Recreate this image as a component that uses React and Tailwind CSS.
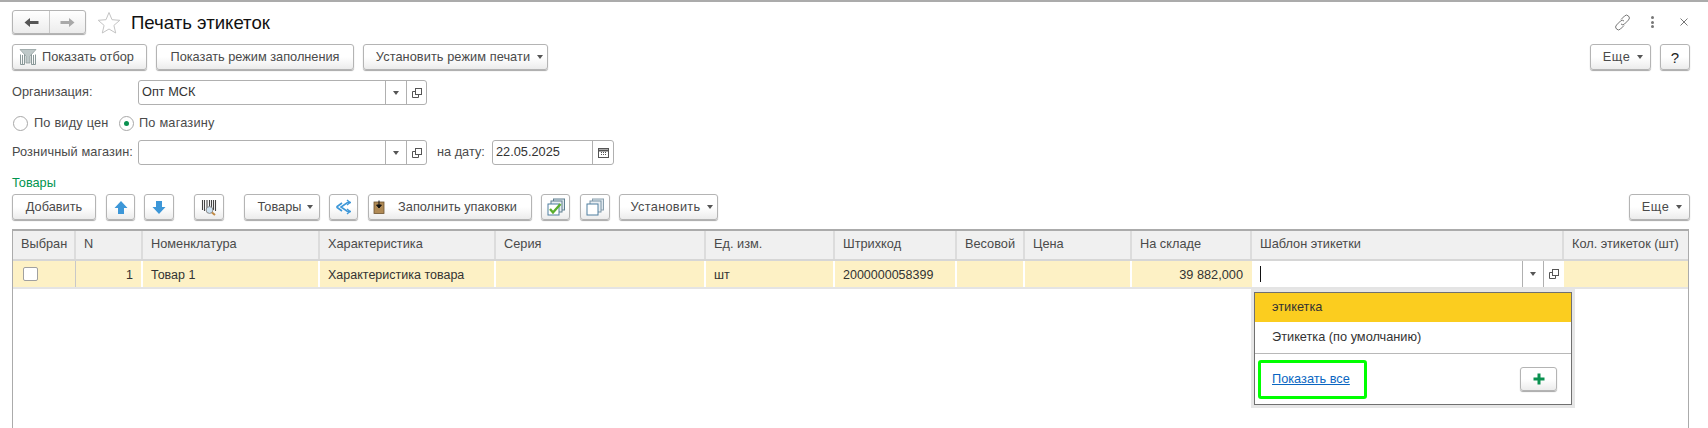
import React from "react";

function Caret() {
  return <span className="inline-block w-0 h-0 border-l-[3.5px] border-r-[3.5px] border-t-[4px] border-l-transparent border-r-transparent border-t-[#555]" />;
}

function Btn({ w, className = "", children }) {
  return (
    <div
      className={`flex items-center justify-center h-[26px] shrink-0 rounded-[3px] border border-[#b4b4b4] bg-gradient-to-b from-white via-white to-[#ececec] shadow-[0_1px_1px_#a8a8a8] text-[#4a4a4a] ${w} ${className}`}
    >
      {children}
    </div>
  );
}

function OpenIcon() {
  return (
    <svg width="12" height="12" viewBox="0 0 12 12" fill="none" stroke="#555" strokeWidth="1">
      <rect x="4.5" y="1.5" width="6" height="6" />
      <path d="M4.5 4.5H1.5V10.5H7.5V7.5" />
    </svg>
  );
}

function Field({ w, children }) {
  return (
    <div className={`flex items-stretch h-[25px] rounded-[3px] border border-[#b0b0b0] bg-white shrink-0 ${w}`}>
      <div className="flex-1 pl-[3px] flex items-center text-[#333]">{children}</div>
      <div className="w-[21px] border-l border-[#b0b0b0] flex items-center justify-center"><Caret /></div>
      <div className="w-[20px] border-l border-[#b0b0b0] flex items-center justify-center"><OpenIcon /></div>
    </div>
  );
}

const cols = [
  "Выбран",
  "N",
  "Номенклатура",
  "Характеристика",
  "Серия",
  "Ед. изм.",
  "Штрихкод",
  "Весовой",
  "Цена",
  "На складе",
  "Шаблон этикетки",
  "Кол. этикеток (шт)",
];

export default function App() {
  return (
    <div className="relative w-[1708px] h-[428px] overflow-hidden bg-white text-[12.75px] leading-none text-[#4a4a4a] font-['Liberation_Sans',Arial,sans-serif]">
      {/* top line */}
      <div className="h-[2px] bg-[#ababab]" />

      {/* title bar */}
      <div className="flex items-center h-[24px] mt-[8px] ml-[12px] mr-[20px]">
        <div className="flex items-stretch w-[74px] h-[24px] rounded-[3px] border border-[#b4b4b4] bg-gradient-to-b from-white to-[#ececec] shadow-[0_1px_1px_#a8a8a8]">
          <div className="w-[37px] flex items-center justify-center border-r border-[#c8c8c8]">
            <svg width="15" height="11" viewBox="0 0 15 11"><path d="M0.5 5.5L6 1V4H14.5V7H6V10Z" fill="#555" /></svg>
          </div>
          <div className="flex-1 flex items-center justify-center">
            <svg width="15" height="11" viewBox="0 0 15 11"><path d="M14.5 5.5L9 1V4H0.5V7H9V10Z" fill="#a8a8a8" /></svg>
          </div>
        </div>
        <svg className="ml-[11px]" width="24" height="23" viewBox="0 0 24 23" fill="none" stroke="#c4c4c4" strokeWidth="1">
          <path d="M12 1.5L15 8.7L22.8 9.3L16.9 14.4L18.7 22L12 18L5.3 22L7.1 14.4L1.2 9.3L9 8.7Z" />
        </svg>
        <div className="ml-[10px] mt-[2px] text-[18.6px] text-[#111]">Печать этикеток</div>
        <div className="ml-auto flex items-center">
          <svg width="17" height="17" viewBox="0 0 17 17" fill="none" stroke="#777" strokeWidth="1">
            <path d="M7 5.5L10.5 2a2.6 2.6 0 0 1 4 4L10.5 10a2.6 2.6 0 0 1-3.5 0" />
            <path d="M10 11.5L6.5 15a2.6 2.6 0 0 1-4-4L6.5 7a2.6 2.6 0 0 1 3.5 0" />
          </svg>
          <div className="ml-[20px] flex flex-col gap-[1.5px]">
            <span className="w-[3px] h-[3px] rounded-full bg-[#777]" />
            <span className="w-[3px] h-[3px] rounded-full bg-[#777]" />
            <span className="w-[3px] h-[3px] rounded-full bg-[#777]" />
          </div>
          <svg className="ml-[26px]" width="8" height="8" viewBox="0 0 8 8" stroke="#777" strokeWidth="1"><path d="M0.5 0.5L7.5 7.5M7.5 0.5L0.5 7.5" /></svg>
        </div>
      </div>

      {/* command bar */}
      <div className="flex items-center mt-[10px] ml-[12px] mr-[18px]">
        <Btn w="w-[135px]" className="justify-start pl-[6px]">
          <svg width="18" height="18" viewBox="0 0 18 18" fill="none">
            <path d="M1 1.5H17L11 8V15H7V8Z" fill="#bfc9c9" stroke="#93a0a0" strokeWidth="0.8" />
            <path d="M1.5 6.5V16.5H5.5V6.5M12.5 6.5V16.5H16.5V6.5M3.5 7V16M14.5 7V16" stroke="#7d8d8d" strokeWidth="0.9" />
          </svg>
          <span className="ml-[5px]">Показать отбор</span>
        </Btn>
        <Btn w="w-[198px]" className="ml-[9px]">Показать режим заполнения</Btn>
        <Btn w="w-[185px]" className="ml-[9px] pl-[8px] tracking-[0.08px]">
          <span>Установить режим печати</span>
          <span className="ml-[7px] flex"><Caret /></span>
        </Btn>
        <Btn w="w-[61px]" className="ml-auto pl-[5px] tracking-[0.6px]">
          <span>Еще</span>
          <span className="ml-[7px] flex"><Caret /></span>
        </Btn>
        <Btn w="w-[30px]" className="ml-[9px] text-[#222] text-[15px]">?</Btn>
      </div>

      {/* organization */}
      <div className="flex items-center mt-[10px] ml-[12px]">
        <div className="w-[126px]">Организация:</div>
        <Field w="w-[289px]">Опт МСК</Field>
      </div>

      {/* radios */}
      <div className="flex items-center mt-[11px] ml-[13px] h-[14px] tracking-[0.2px]">
        <span className="w-[15px] h-[15px] rounded-full border border-[#a8a8a8] bg-white" />
        <span className="ml-[6px] w-[85px]">По виду цен</span>
        <span className="w-[15px] h-[15px] rounded-full border border-[#a8a8a8] bg-white flex items-center justify-center">
          <span className="w-[5px] h-[5px] rounded-full bg-[#0a9150]" />
        </span>
        <span className="ml-[5px]">По магазину</span>
      </div>

      {/* retail store */}
      <div className="flex items-center mt-[10px] ml-[12px]">
        <div className="w-[126px] whitespace-nowrap tracking-[0.1px]">Розничный магазин:</div>
        <Field w="w-[289px]" />
        <div className="ml-[10px] w-[55px]">на дату:</div>
        <div className="flex items-stretch h-[25px] w-[122px] rounded-[3px] border border-[#b0b0b0] bg-white">
          <div className="flex-1 pl-[3px] flex items-center text-[#333]">22.05.2025</div>
          <div className="w-[21px] border-l border-[#b0b0b0] flex items-center justify-center">
            <svg width="11" height="11" viewBox="0 0 11 11" fill="none" stroke="#555"><rect x="0.5" y="1.5" width="10" height="9" /><path d="M0.5 3.5H10.5" strokeWidth="2" /><path d="M3 5.5h1M5 5.5h1M7 5.5h1M3 7.5h1M5 7.5h1M7 7.5h1" /></svg>
          </div>
        </div>
      </div>

      {/* group title */}
      <div className="mt-[12px] ml-[12px] h-[13px] text-[#00954f]">Товары</div>

      {/* table toolbar */}
      <div className="flex items-center mt-[4px] ml-[12px] mr-[18px]">
        <Btn w="w-[84px]">Добавить</Btn>
        <Btn w="w-[29px]" className="ml-[10px]">
          <svg width="14" height="15" viewBox="0 0 14 15"><path d="M7 1L13.5 8H10V14H4V8H0.5Z" fill="#3d97d8" /></svg>
        </Btn>
        <Btn w="w-[30px]" className="ml-[9px]">
          <svg width="14" height="15" viewBox="0 0 14 15"><path d="M7 14L13.5 7H10V1H4V7H0.5Z" fill="#3d97d8" /></svg>
        </Btn>
        <Btn w="w-[30px]" className="ml-[20px]">
          <svg width="16" height="17" viewBox="0 0 16 17" fill="none">
            <path d="M1.5 1V11M3.5 1V12M6 1V10M8.5 1V9M10.5 1V9M12.5 1V11M14.5 1V12" stroke="#444" strokeWidth="1.1" />
            <circle cx="8.5" cy="11" r="3.4" fill="#cfe3f2" stroke="#8a8a8a" />
            <path d="M11 13.5L14 16" stroke="#c08a45" strokeWidth="2" />
          </svg>
        </Btn>
        <Btn w="w-[76px]" className="ml-[20px] pl-[7px]">
          <span>Товары</span>
          <span className="ml-[6px] flex"><Caret /></span>
        </Btn>
        <Btn w="w-[29px]" className="ml-[9px]">
          <svg width="18" height="16" viewBox="0 0 18 16" fill="none" stroke="#3d97d8" strokeWidth="1.6">
            <path d="M16 3.5H12.5L6 8L12.5 12.5H16" />
            <path d="M1.5 8L7 4M1.5 8L7 12" />
            <path d="M12 1L15 3.5L12 6M12 10L15 12.5L12 15" strokeWidth="1.3" />
          </svg>
        </Btn>
        <Btn w="w-[164px]" className="ml-[10px] pr-[10px]">
          <svg width="12" height="14" viewBox="0 0 12 14">
            <rect x="1" y="2" width="10" height="11.5" fill="#b08a55" stroke="#6e5330" strokeWidth="0.8" />
            <path d="M6 0.5V7M3.6 5L6 8L8.4 5Z" fill="#111" stroke="#111" strokeWidth="1" />
          </svg>
          <span className="ml-[13px]">Заполнить упаковки</span>
        </Btn>
        <Btn w="w-[29px]" className="ml-[9px]">
          <svg width="18" height="18" viewBox="0 0 18 18" fill="none">
            <rect x="6.5" y="1" width="11" height="11" fill="#dfe8ee" stroke="#5f7f8f" />
            <rect x="4" y="3" width="11" height="11" fill="#e9eef2" stroke="#5f7f8f" />
            <rect x="1" y="6" width="11" height="11" fill="#fff" stroke="#4f7f9f" />
            <path d="M3 11L6 14.5L13.5 6" stroke="#5aae2d" strokeWidth="2.4" />
          </svg>
        </Btn>
        <Btn w="w-[30px]" className="ml-[10px]">
          <svg width="18" height="18" viewBox="0 0 18 18" fill="none">
            <rect x="6.5" y="1" width="11" height="11" fill="#dfe8ee" stroke="#8aa0ae" />
            <rect x="4" y="3" width="11" height="11" fill="#e9eef2" stroke="#7a94a5" />
            <rect x="1" y="6" width="11" height="11" fill="#fff" stroke="#4f7f9f" />
          </svg>
        </Btn>
        <Btn w="w-[99px]" className="ml-[9px] pl-[7px] tracking-[0.3px]">
          <span>Установить</span>
          <span className="ml-[7px] flex"><Caret /></span>
        </Btn>
        <Btn w="w-[61px]" className="ml-auto pl-[5px] tracking-[0.6px]">
          <span>Еще</span>
          <span className="ml-[7px] flex"><Caret /></span>
        </Btn>
      </div>

      {/* table */}
      <div className="mt-[9px] ml-[12px] w-[1677px] h-[200px] border-t-2 border-l border-r border-[#ababab]">
        <div className="grid grid-cols-[63px_67px_177px_176px_210px_129px_122px_68px_107px_120px_312px_121px] h-[30px] bg-[#f0f0f0] border-b-2 border-[#d6d6d6]">
          {cols.map((h, i) => (
            <div key={h} className={`flex items-center whitespace-nowrap pl-[8px] pb-[2px] ${i < 11 ? "border-r-2 border-[#dcdcdc]" : ""}`}>
              {h}
            </div>
          ))}
        </div>
        <div className="grid grid-cols-[63px_67px_177px_176px_210px_129px_122px_68px_107px_120px_312px_121px] h-[28px] bg-[#fdf1c5] border-b-2 border-[#e4e4e4] text-[12.5px] text-[#333]">
          <div className="flex items-center pl-[10px] border-r border-[#c8c8c8]">
            <span className="w-[15px] h-[14px] rounded-[2px] border border-[#a0a0a0] bg-white" />
          </div>
          <div className="flex items-center justify-end pr-[8px] pt-[2px] border-r-2 border-white">1</div>
          <div className="flex items-center pl-[8px] pt-[2px] border-r-2 border-white">Товар 1</div>
          <div className="flex items-center pl-[8px] pt-[2px] border-r-2 border-white">Характеристика товара</div>
          <div className="border-r-2 border-white" />
          <div className="flex items-center pl-[8px] pt-[2px] border-r-2 border-white">шт</div>
          <div className="flex items-center pl-[8px] pt-[2px] border-r-2 border-white">2000000058399</div>
          <div className="border-r-2 border-white" />
          <div className="border-r-2 border-white" />
          <div className="flex items-center justify-end pr-[9px] pt-[2px] text-[12.75px]">39 882,000</div>
          <div className="flex items-stretch bg-white">
            <div className="flex-1 pl-[8px] flex items-center"><span className="w-px h-[16px] bg-[#111]" /></div>
            <div className="w-[21px] border-l border-[#b0b0b0] flex items-center justify-center"><Caret /></div>
            <div className="w-[21px] border-l border-[#b0b0b0] flex items-center justify-center"><OpenIcon /></div>
          </div>
          <div />
        </div>
      </div>

      {/* dropdown */}
      <div className="absolute left-[1254px] top-[292px] w-[318px] h-[113px] bg-white border border-[#707070] shadow-[0_0_0_3px_#e6e6e6] flex flex-col">
        <div className="h-[29px] bg-[#fbcd1f] flex items-center pl-[17px] text-[#333]">этикетка</div>
        <div className="h-[31px] flex items-center pl-[17px] text-[#333]">Этикетка (по умолчанию)</div>
        <div className="h-px bg-[#b8b8b8]" />
        <div className="flex items-center pl-[3px] pr-[14px] flex-1">
          <div className="w-[109px] h-[39px] border-[3px] border-[#00ff00] rounded-[3px] pl-[11px] flex items-center">
            <span className="underline text-[#0a66c2]">Показать все</span>
          </div>
          <Btn w="w-[37px]" className="ml-auto !h-[24px]">
            <svg width="12" height="12" viewBox="0 0 12 12"><path d="M4.5 0.5H7.5V4.5H11.5V7.5H7.5V11.5H4.5V7.5H0.5V4.5H4.5Z" fill="#0a9150" /></svg>
          </Btn>
        </div>
      </div>
    </div>
  );
}
